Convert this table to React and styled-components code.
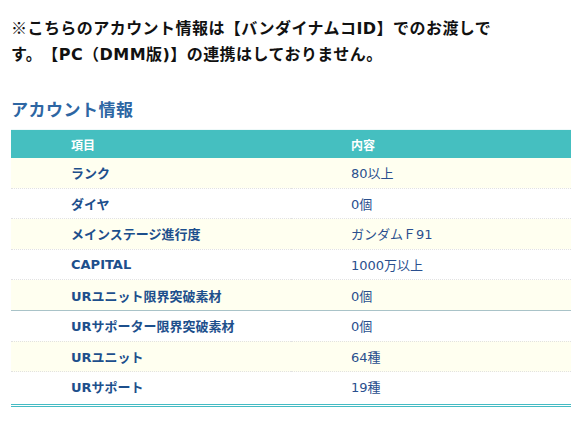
import React from 'react';
import styled, { createGlobalStyle } from 'styled-components';

const GlobalStyle = createGlobalStyle`
  body {
    margin: 0;
    background: #fff;
    font-family: 'DejaVu Sans', 'Noto Sans CJK JP', sans-serif;
  }
`;

//* rows of the account table
const rows = [
  { label: 'ランク', value: '80以上' },
  { label: 'ダイヤ', value: '0個' },
  { label: 'メインステージ進行度', value: 'ガンダムＦ91' },
  { label: 'CAPITAL', value: '1000万以上' },
  { label: 'URユニット限界突破素材', value: '0個', divider: true },
  { label: 'URサポーター限界突破素材', value: '0個' },
  { label: 'URユニット', value: '64種' },
  { label: 'URサポート', value: '19種' }
];

const App = () => {
  return (
    <Page>
      <GlobalStyle />
      <Notice>
        <Mark>※</Mark>こちらのアカウント情報は【バンダイナムコID】でのお渡しで
        <br />
        す。【PC（DMM版)】の連携はしておりません。
      </Notice>
      <Heading>アカウント情報</Heading>
      <Table>
        <thead>
          <tr>
            <Th>項目</Th>
            <Th>内容</Th>
          </tr>
        </thead>
        <tbody>
          {rows.map((row, i) => (
            <Row key={row.label} $odd={i % 2 === 0} $divider={row.divider}>
              <Label>{row.label}</Label>
              <Value>{row.value}</Value>
            </Row>
          ))}
        </tbody>
      </Table>
    </Page>
  );
};

export default App;

const Page = styled.div`
  padding: 16px 10px 0 11px;
`;

const Notice = styled.p`
  margin: 0;
  font-size: 16px;
  font-weight: bold;
  line-height: 26px;
  color: #111;
  letter-spacing: 0.45px;
  text-spacing-trim: space-all;
`;

const Mark = styled.span`
  font-family: 'Noto Sans CJK JP', sans-serif;
  line-height: 0;
`;

const Heading = styled.h2`
  margin: 29px 0 0;
  font-family: 'Noto Sans CJK JP', sans-serif;
  font-size: 17px;
  font-weight: bold;
  line-height: 24px;
  letter-spacing: 0.5px;
  color: #2d66a3;
`;

const Table = styled.table`
  width: 560px;
  margin-top: 8px;
  border-collapse: collapse;
  border-top: 1px solid #8ed6d6;
  border-bottom: 3px double #45bcc4;
  font-size: 13px;
`;

const Th = styled.th`
  width: 50%;
  height: 28px;
  padding: 0 0 0 60px;
  text-align: left;
  background: #45bfc0;
  border-top: 1px solid #eef9f9;
  color: #fff;
  font-size: 12px;
  font-weight: bold;
`;

const Row = styled.tr`
  background: ${(p) => (p.$odd ? '#fffff0' : '#fff')};
  border-bottom: ${(p) => (p.$divider ? '1px solid #a9c3c8' : '1px dotted #e2e2e2')};

  &:last-child td {
    padding-bottom: 2px;
  }
`;

const Label = styled.td`
  height: 29.6px;
  padding: 0 0 0 60px;
  font-weight: bold;
  color: #1d4f8c;
`;

const Value = styled.td`
  padding: 0 0 0 60px;
  color: #2a4f8e;
`;
